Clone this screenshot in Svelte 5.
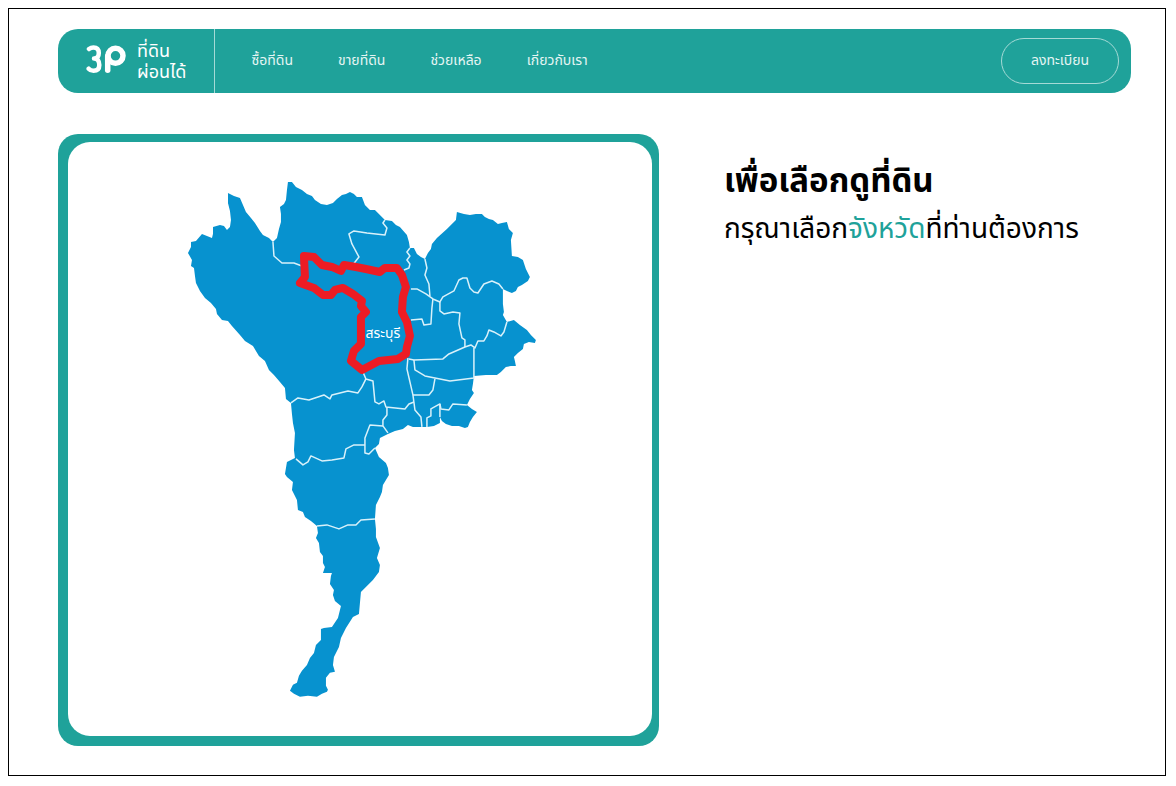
<script>
  const links = ['ซื้อที่ดิน', 'ขายที่ดิน', 'ช่วยเหลือ', 'เกี่ยวกับเรา'];

  const region =
    'M228 193 L234 196 L240 198 L243 205 L246 212 L251 218 L255 223 L260 231 L263 235 L269 238 L273 242 L277 238 L279 229 L281 222 L281 214 L280 207 L284 204 L286 200 L287 190 L288 182 L292 182 L296 187 L302 190 L307 194 L312 196 L315 200 L321 204 L327 205 L333 203 L337 199 L342 195 L346 194 L350 192 L354 194 L357 197 L362 197 L365 205 L370 210 L375 210 L380 215 L385 220 L392 221 L396 225 L400 227 L407 235 L409 242 L410 248 L414 248 L417 254 L421 257 L425 259 L428 253 L431 249 L432 244 L437 238 L447 229 L456 220 L457 212 L464 214 L470 215 L476 214 L482 214 L485 217 L489 219 L493 220 L498 224 L502 223 L507 222 L509 229 L513 233 L511 240 L512 256 L518 257 L523 260 L526 269 L530 277 L528 281 L522 285 L518 287 L516 291 L512 293 L507 291 L503 289 L503 304 L504 312 L503 315 L507 322 L514 320 L520 325 L527 330 L531 335 L536 340 L535 343 L529 342 L524 344 L523 349 L518 353 L514 357 L515 361 L516 366 L511 366 L506 367 L501 372 L497 375 L486 375 L474 376 L473 384 L472 390 L474 393 L470 399 L467 405 L472 409 L477 412 L473 417 L470 422 L468 427 L465 428 L459 426 L452 426 L446 424 L442 421 L440 417 L440 423 L434 426 L427 427 L413 427 L408 425 L403 429 L395 431 L388 434 L380 438 L379 444 L375 448 L379 457 L386 463 L388 468 L389 475 L383 485 L382 492 L380 497 L376 505 L375 519 L376 529 L376 537 L380 548 L377 558 L380 565 L379 572 L373 580 L366 587 L361 592 L360 603 L359 614 L353 617 L346 628 L341 638 L339 647 L334 657 L333 665 L335 672 L330 673 L326 678 L326 686 L328 690 L327 692 L322 694 L317 697 L308 696 L300 697 L294 694 L290 691 L293 685 L297 683 L299 676 L302 671 L307 665 L310 658 L314 653 L316 645 L321 640 L321 629 L324 628 L332 627 L338 618 L341 606 L335 601 L333 595 L334 590 L330 584 L331 576 L332 573 L323 573 L325 567 L323 563 L323 556 L320 552 L319 543 L316 538 L318 533 L317 526 L311 521 L305 517 L303 512 L298 510 L297 500 L292 490 L293 482 L287 477 L285 474 L287 462 L295 458 L294 450 L295 433 L293 423 L292 414 L291 403 L286 399 L285 388 L280 382 L274 375 L269 370 L265 361 L259 356 L253 346 L245 341 L240 335 L232 326 L228 321 L222 320 L217 314 L216 309 L211 303 L205 298 L200 291 L196 283 L195 276 L194 268 L191 266 L192 260 L188 253 L191 247 L191 242 L196 241 L202 234 L207 236 L212 238 L213 234 L213 227 L220 225 L224 226 L227 230 L230 227 L231 220 L230 211 L228 203 Z';

  const borders = [
    'M273 242 L274 256 L282 263 L287 263 L294 263 L302 266',
    'M385 220 L383 223 L387 228 L385 235 L367 233 L354 231 L349 234 L352 244 L359 257 L352 266',
    'M410 248 L407 252 L410 256 L407 260 L410 264 L409 268 L404 270',
    'M425 259 L427 268 L425 275 L429 284 L430 296',
    'M411 289 L417 289 L426 294 L433 299 L440 302 L443 297 L454 291 L459 280 L463 278 L467 278 L470 288 L474 292 L478 293 L484 284 L492 281 L499 284 L503 289',
    'M433 299 L432 308 L431 324 L424 325 L422 319 L411 320',
    'M440 302 L440 311 L444 314 L453 312 L460 313 L459 324 L462 338 L465 340 L465 347',
    'M409 359 L414 360 L443 359 L449 354 L465 347 L471 345 L475 348 L478 341 L484 341 L487 336 L489 330 L494 332 L501 336 L504 332 L507 322',
    'M474 348 L474 378 L450 381 L435 378 L425 376 L415 370 L414 360',
    'M408 358 L407 369 L410 382 L413 395 L415 410 L421 417 L422 427',
    'M413 395 L429 395 L433 390 L435 379',
    'M427 427 L427 418 L431 416 L431 409 L440 404 L441 409 L449 410 L453 404 L467 405',
    'M440 404 L440 417',
    'M363 372 L366 379 L373 381 L375 402 L379 404 L384 401 L386 407 L405 409 L409 404 L414 402',
    'M366 379 L362 387 L358 393 L348 391 L332 395 L330 399 L324 395 L309 400 L298 398 L291 403',
    'M387 407 L387 415 L383 420 L383 426 L388 433',
    'M383 426 L370 425 L365 438 L365 453 L369 454 L375 448',
    'M365 445 L354 445 L346 449 L344 458 L332 460 L322 461 L311 456 L308 462 L303 465 L296 459',
    'M317 526 L327 525 L339 529 L348 525 L356 525 L361 520 L375 519'
  ];

  const selected =
    'M304 256 L314 257 L322 265 L332 267 L341 271 L344 265 L356 267 L366 269 L380 272 L385 268 L397 268 L402 275 L406 287 L403 297 L402 312 L407 322 L410 336 L407 347 L406 354 L398 359 L379 361 L362 370 L351 361 L354 351 L361 344 L361 328 L361 317 L366 312 L361 306 L362 301 L353 294 L343 288 L335 290 L331 295 L323 295 L314 288 L300 283 L305 277 Z';
</script>

<div class="page">
  <header>
    <a class="brand" href="#home" aria-label="3P ที่ดินผ่อนได้">
      <svg class="mark" viewBox="0 0 40 34" aria-hidden="true">
        <path class="left" d="M3 4 Q5 2.500 7.500 2.500 Q12.800 2.500 12.800 8 Q12.800 13.500 8 13.500 Q13.300 13.500 13.300 20 Q13.300 25.800 7.500 25.800 Q4.500 25.800 2.700 23.700" />
        <circle cx="29.500" cy="10.800" r="7.500" />
        <path d="M21.700 11 V25.300" />
      </svg>
      <span>ที่ดิน<br />ผ่อนได้</span>
    </a>
    <nav>
      {#each links as label}
        <a href="#menu">{label}</a>
      {/each}
    </nav>
    <button type="button">ลงทะเบียน</button>
  </header>

  <main>
    <section class="card">
      <svg class="map" viewBox="68 142 584 594" role="img" aria-label="สระบุรี">
        <path class="land" d={region} />
        {#each borders as d}
          <path class="border" {d} />
        {/each}
        <path class="selected" d={selected} />
        <text x="383" y="338" text-anchor="middle">สระบุรี</text>
      </svg>
    </section>
    <section class="intro">
      <h1>เพื่อเลือกดูที่ดิน</h1>
      <p>กรุณาเลือก<em>จังหวัด</em>ที่ท่านต้องการ</p>
    </section>
  </main>
</div>

<style>
  :global(body) {
    margin: 0;
    background: #fff;
  }
  .page {
    box-sizing: border-box;
    min-height: calc(100vh - 18px);
    margin: 8px 10px 10px 8px;
    padding: 20px 34px 29px 49px;
    border: 1px solid #000;
    font-family: 'Noto Sans Thai', 'Noto Sans', 'Open Sans', sans-serif;
    color: #000;
  }
  header {
    display: flex;
    align-items: center;
    height: 64px;
    border-radius: 20px;
    background: #1fa29a;
    color: #fff;
  }
  .brand {
    box-sizing: border-box;
    display: flex;
    align-items: center;
    gap: 11px;
    height: 100%;
    padding: 1px 28px 0;
    border-right: 1px solid #a5dad6;
    color: inherit;
    text-decoration: none;
    font-size: 18px;
    line-height: 21px;
    white-space: nowrap;
  }
  .mark {
    width: 40px;
    height: 34px;
    fill: none;
    stroke: #fff;
    stroke-width: 5.5;
    stroke-linecap: round;
    stroke-linejoin: round;
  }
  .left {
    stroke-width: 4.5;
  }
  nav {
    display: flex;
    gap: 45px;
    flex: 1;
    padding-left: 36px;
  }
  nav a {
    color: #e4f5f3;
    font-size: 14px;
    line-height: 24px;
    text-decoration: none;
    white-space: nowrap;
  }
  button {
    width: 118px;
    height: 46px;
    margin-right: 12px;
    padding: 0 0 2px;
    border: 1px solid #a5dad6;
    border-radius: 23px;
    background: transparent;
    color: #e4f5f3;
    font: inherit;
    font-size: 14px;
  }
  main {
    display: grid;
    grid-template-columns: 56% 1fr;
    gap: 65px;
    align-items: start;
    margin-top: 41px;
  }
  .card {
    padding: 8px 7px 10px 10px;
    border-radius: 20px;
    background: #1fa29a;
  }
  .map {
    display: block;
    width: 100%;
    border-radius: 22px;
    background: #fff;
  }
  .land {
    fill: #0792cf;
  }
  .border {
    fill: none;
    stroke: #d9f1fa;
    stroke-width: 1.5;
    stroke-linejoin: round;
  }
  .selected {
    fill: none;
    stroke: #ed1c24;
    stroke-width: 8;
    stroke-linejoin: round;
  }
  text {
    fill: #fff;
    font-size: 14px;
  }
  .intro {
    padding-top: 24px;
  }
  h1 {
    margin: 0;
    font-size: 33px;
    line-height: 48px;
    font-weight: 700;
    white-space: nowrap;
  }
  p {
    margin: 0;
    font-size: 28px;
    line-height: 48px;
    white-space: nowrap;
  }
  em {
    color: #1fa29a;
    font-style: normal;
  }
</style>
